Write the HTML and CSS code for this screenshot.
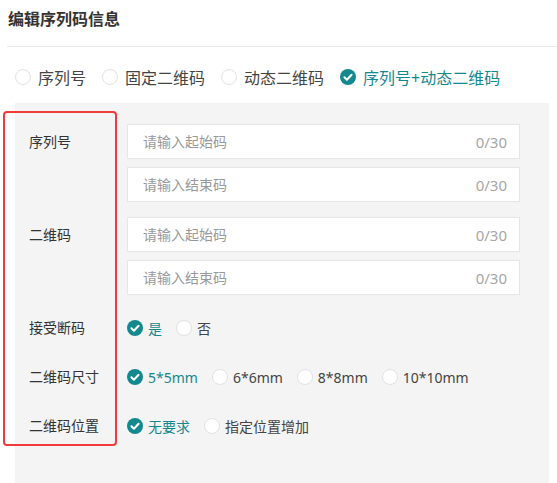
FILE: index.html
```html
<!DOCTYPE html>
<html lang="zh-CN">
<head>
  <meta charset="UTF-8" />
  <title>编辑序列码信息</title>
  <link rel="stylesheet" href="styles.css">
</head>
<body>
  <div class="page">
    <h2 class="title">编辑序列码信息</h2>

    <div class="type-select">
      <label class="radio"><span class="dot"></span>序列号</label>
      <label class="radio"><span class="dot"></span>固定二维码</label>
      <label class="radio"><span class="dot"></span>动态二维码</label>
      <label class="radio checked">
        <svg class="dot-on" viewBox="0 0 16 16"><circle cx="8" cy="8" r="8"/><path d="M4.4 8.3l2.5 2.4 4.7-5"/></svg>序列号+动态二维码
      </label>
    </div>

    <div class="panel">
      <div class="form-item">
        <div class="label">序列号</div>
        <div class="fields">
          <div class="field"><input placeholder="请输入起始码"><span class="count">0/30</span></div>
          <div class="field"><input placeholder="请输入结束码"><span class="count">0/30</span></div>
        </div>
      </div>

      <div class="form-item">
        <div class="label">二维码</div>
        <div class="fields">
          <div class="field"><input placeholder="请输入起始码"><span class="count">0/30</span></div>
          <div class="field"><input placeholder="请输入结束码"><span class="count">0/30</span></div>
        </div>
      </div>

      <div class="form-item inline">
        <div class="label">接受断码</div>
        <div class="options">
          <label class="radio sm checked"><svg class="dot-on" viewBox="0 0 16 16"><circle cx="8" cy="8" r="8"/><path d="M4.4 8.3l2.5 2.4 4.7-5"/></svg>是</label>
          <label class="radio sm"><span class="dot"></span>否</label>
        </div>
      </div>

      <div class="form-item inline">
        <div class="label">二维码尺寸</div>
        <div class="options">
          <label class="radio sm checked"><svg class="dot-on" viewBox="0 0 16 16"><circle cx="8" cy="8" r="8"/><path d="M4.4 8.3l2.5 2.4 4.7-5"/></svg>5*5mm</label>
          <label class="radio sm"><span class="dot"></span>6*6mm</label>
          <label class="radio sm"><span class="dot"></span>8*8mm</label>
          <label class="radio sm"><span class="dot"></span>10*10mm</label>
        </div>
      </div>

      <div class="form-item inline">
        <div class="label">二维码位置</div>
        <div class="options">
          <label class="radio sm checked"><svg class="dot-on" viewBox="0 0 16 16"><circle cx="8" cy="8" r="8"/><path d="M4.4 8.3l2.5 2.4 4.7-5"/></svg>无要求</label>
          <label class="radio sm"><span class="dot"></span>指定位置增加</label>
        </div>
      </div>
    </div>

    <!-- highlight around the label column -->
    <div class="mark"></div>
  </div>
</body>
</html>
```

FILE: styles.css
```css
body {
  margin: 0;
  font-family: "Noto Sans", "Noto Sans CJK SC", sans-serif;
  color: #333;
  background: #fff;
  overflow: hidden;
}

.page {
  position: relative;
  height: 483px;
}

.title {
  margin: 0 0 0 7px;
  padding: 8px 0 16px 1px;
  font-size: 16px;
  line-height: 22px;
  font-weight: bold;
  color: #333;
  border-bottom: 1px solid #e9e9e9;
}

.type-select {
  display: flex;
  align-items: center;
  margin: 19px 0 0 15px;
  height: 22px;
}

.radio {
  display: flex;
  align-items: center;
  font-size: 16px;
  color: #444;
  margin-right: 16px;
  white-space: nowrap;
}

.radio .dot,
.radio .dot-on {
  flex: none;
  width: 16px;
  height: 16px;
  margin-right: 7px;
  box-sizing: border-box;
}

.radio .dot {
  border: 1px solid #e2e2e2;
  border-radius: 50%;
  background: #fff;
}

.dot-on circle {
  fill: #13888e;
}

.dot-on path {
  fill: none;
  stroke: #fff;
  stroke-width: 2;
  stroke-linecap: round;
  stroke-linejoin: round;
}

.radio.checked {
  color: #13888e;
}

.panel {
  margin: 15px 0 0 15px;
  width: 534px;
  height: 400px;
  box-sizing: border-box;
  padding: 21px 29px 0 14px;
  background: #f4f4f4;
}

.form-item {
  display: flex;
  margin-bottom: 15px;
}

.form-item .label {
  width: 98px;
  flex: none;
  font-size: 14px;
  line-height: 35px;
  color: #333;
}

.fields {
  flex: 1;
  display: flex;
  flex-direction: column;
  gap: 8px;
}

.field {
  display: flex;
  align-items: center;
  height: 35px;
  box-sizing: border-box;
  background: #fff;
  border: 1px solid #e6e6e6;
  padding: 0 12px 0 15px;
}

.field input {
  flex: 1;
  border: none;
  outline: none;
  padding: 0;
  font: inherit;
  font-size: 14px;
  background: transparent;
}

.field input::placeholder {
  color: #999;
}

.count {
  font-size: 15px;
  color: #a6a6a6;
}

.form-item.inline {
  margin: 17px 0 0;
}

.form-item.inline .label {
  line-height: 32px;
}

.options {
  display: flex;
  align-items: center;
}

.radio.sm {
  font-size: 14px;
  margin-right: 14px;
}

.radio.sm .dot,
.radio.sm .dot-on {
  margin-right: 5px;
}

.mark {
  position: absolute;
  left: 3px;
  top: 111px;
  width: 114px;
  height: 335px;
  box-sizing: border-box;
  border: 2px solid #f23a3a;
  border-radius: 4px;
}
```
